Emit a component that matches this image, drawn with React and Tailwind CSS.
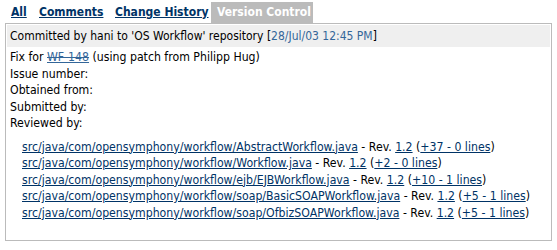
export default function App() {
  const files = [
    { path: "src/java/com/opensymphony/workflow/AbstractWorkflow.java", diff: "+37 - 0 lines" },
    { path: "src/java/com/opensymphony/workflow/Workflow.java", diff: "+2 - 0 lines" },
    { path: "src/java/com/opensymphony/workflow/ejb/EJBWorkflow.java", diff: "+10 - 1 lines" },
    { path: "src/java/com/opensymphony/workflow/soap/BasicSOAPWorkflow.java", diff: "+5 - 1 lines" },
    { path: "src/java/com/opensymphony/workflow/soap/OfbizSOAPWorkflow.java", diff: "+5 - 1 lines" },
  ];

  return (
    <div className="w-[557px] h-[250px] bg-white text-[12px] text-black font-['DejaVu_Sans_Condensed','DejaVu_Sans',sans-serif] leading-[16.5px]">
      {/* TABS */}
      <div className="flex items-end h-[23px] pl-[11px] font-bold whitespace-nowrap">
        <div className="w-[28px] pb-[3px]">
          <a href="#" className="underline text-[#003366]">All</a>
        </div>
        <div className="w-[76px] pb-[3px]">
          <a href="#" className="underline text-[#003366]">Comments</a>
        </div>
        <div className="w-[96px] pb-[3px]">
          <a href="#" className="underline text-[#003366]">Change History</a>
        </div>
        <span className="bg-[#bbbbbb] text-white pl-[6px] w-[102px] h-[21px] flex items-center">Version Control</span>
      </div>

      {/* BOX */}
      <div className="mx-[5px] w-[547px] h-[218px] border border-[#bbbbbb] p-px">
        <div className="bg-[#efefef] h-[22px] flex items-center px-[3px]">
          <span>
            Committed by hani to 'OS Workflow' repository{" "}
            [<span className="text-[#336699]">28/Jul/03 12:45 PM</span>]
          </span>
        </div>

        <div className="px-[3px] pt-[2px] text-[12.2px]">
          <div>
            Fix for{" "}
            <a href="#" className="text-[#336699] [text-decoration-line:underline_line-through]">WF-148</a>{" "}
            (using patch from Philipp Hug)
          </div>
          <div>Issue number:</div>
          <div>Obtained from:</div>
          <div>Submitted by:</div>
          <div>Reviewed by:</div>

          <div className="pl-[12px] pt-[7px]">
            {files.map((f) => (
              <div key={f.path} className="whitespace-nowrap">
                <a href="#" className="text-[#003366] underline">{f.path}</a>
                {" - Rev. "}
                <a href="#" className="text-[#003366] underline">1.2</a>
                {" ("}
                <a href="#" className="text-[#003366] underline">{f.diff}</a>
                {")"}
              </div>
            ))}
          </div>
        </div>
      </div>
    </div>
  );
}
